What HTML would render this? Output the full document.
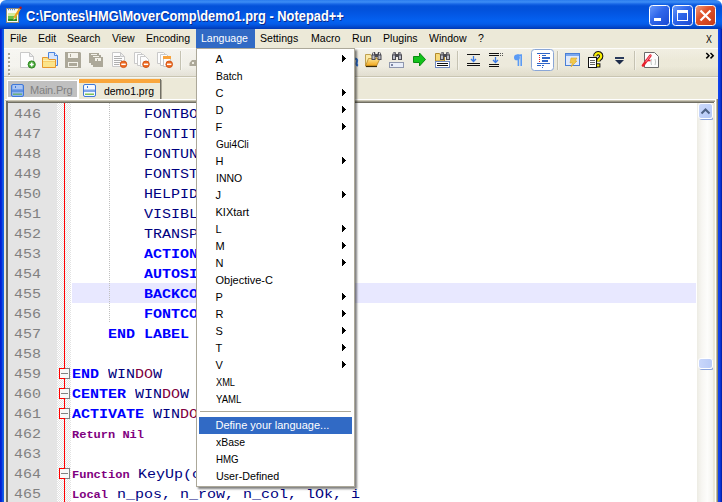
<!DOCTYPE html>
<html>
<head>
<meta charset="utf-8">
<title>Notepad++</title>
<style>
html,body{margin:0;padding:0;}
body{width:722px;height:502px;overflow:hidden;position:relative;background:#ece9d8;font-family:"Liberation Sans",sans-serif;}
.abs,.abs *{position:absolute;}
span{position:static !important;}
#frame{left:0;top:0;width:722px;height:502px;background:linear-gradient(to right,#0019cf 0px,#0831d9 2px,#166aee 3px,#0855dd 4px,#0855dd 717px,#1448ee 718px,#0a3be6 720px,#001a9a 722px);}
#title{left:0;top:0;width:722px;height:29px;border-radius:6px 6px 0 0;
 background:linear-gradient(to bottom,#2a7bee 0px,#3d8df5 2px,#1766e6 4px,#0351d9 6px,#0252dc 10px,#0358e6 15px,#0461f1 21px,#045ce9 24px,#034fd6 26px,#0140c0 28px,#0138b4 29px);}
#corner{left:0;top:0;width:722px;height:10px;background:#fff;}
#ttext{left:26px;top:8px;transform:scaleX(0.918);transform-origin:0 0;color:#fff;font-weight:bold;font-size:14px;white-space:nowrap;text-shadow:1px 1px 0 #0a2a8c;}
#client{left:4px;top:29px;width:714px;height:473px;background:#ece9d8;}
.mi{top:32px;font-size:11px;color:#000;white-space:nowrap;line-height:13px;}
#langhl{left:196px;top:29px;width:59px;height:19px;background:#316ac5;}
#toolbar{left:4px;top:48px;width:714px;height:29px;background:linear-gradient(to bottom,rgba(255,255,255,0.9) 0px,rgba(255,255,255,0.9) 1px,rgba(255,255,255,0.25) 1px,rgba(255,255,255,0) 12px,rgba(120,110,70,0) 18px,rgba(120,110,70,0.10) 27px,rgba(120,110,70,0.10) 29px),linear-gradient(to right,#f5f4ef 0%,#f0eee6 35%,#edeadc 70%,#ece9d8 100%);}
#editor{left:7px;top:101px;width:708px;height:401px;background:#fff;}
.code{left:71px;font-family:"Liberation Mono",monospace;font-size:12.5px;line-height:20px;height:20px;white-space:pre;letter-spacing:0px;transform:scaleX(1.2);transform-origin:0 0;}
.ln{left:13.5px;font-family:"Liberation Mono",monospace;font-size:12.5px;line-height:20px;height:20px;color:#808080;letter-spacing:0px;transform:scaleX(1.2);transform-origin:0 0;}
.b{font-weight:bold;}
.k{color:#0000ff;}
.p{color:#800080;font-weight:bold;}
.n{color:#000080;}
.d{color:#800040;}
#menu{z-index:5;left:196px;top:48px;width:159px;height:439px;background:#fff;border:1px solid #aca899;box-sizing:border-box;box-shadow:2px 2px 2px rgba(0,0,0,0.5);}
.it{left:18.5px;font-size:11px;line-height:17px;height:17px;color:#000;white-space:nowrap;}
.ar{left:145px;width:0;height:0;border-left:4px solid #000;border-top:3.5px solid transparent;border-bottom:3.5px solid transparent;}
</style>
</head>
<body>
<div class="abs" id="corner"></div>
<div class="abs" id="frame" style="top:8px;height:494px"></div>
<div class="abs" id="title"></div>
<div class="abs" id="ttext">C:\Fontes\HMG\MoverComp\demo1.prg - Notepad++</div>
<div class="abs" id="client"></div>
<div class="abs" id="langhl"></div>
<div class="abs mi" style="left:10px;transform:scaleX(0.96);transform-origin:0 0;">File</div>
<div class="abs mi" style="left:38px;transform:scaleX(0.96);transform-origin:0 0;">Edit</div>
<div class="abs mi" style="left:67px;transform:scaleX(0.96);transform-origin:0 0;">Search</div>
<div class="abs mi" style="left:112px;transform:scaleX(0.96);transform-origin:0 0;">View</div>
<div class="abs mi" style="left:146px;transform:scaleX(0.96);transform-origin:0 0;">Encoding</div>
<div class="abs mi" style="left:201px;color:#fff;transform:scaleX(0.96);transform-origin:0 0;">Language</div>
<div class="abs mi" style="left:260px;transform:scaleX(0.96);transform-origin:0 0;">Settings</div>
<div class="abs mi" style="left:311px;transform:scaleX(0.96);transform-origin:0 0;">Macro</div>
<div class="abs mi" style="left:352px;transform:scaleX(0.96);transform-origin:0 0;">Run</div>
<div class="abs mi" style="left:383px;transform:scaleX(0.96);transform-origin:0 0;">Plugins</div>
<div class="abs mi" style="left:429px;transform:scaleX(0.96);transform-origin:0 0;">Window</div>
<div class="abs mi" style="left:478px;transform:scaleX(0.96);transform-origin:0 0;">?</div>
<div class="abs mi" style="left:706px;transform:scaleX(0.8);transform-origin:0 0;top:33px;">X</div>
<div class="abs" id="toolbar"></div>
<div class="abs" style="left:4px;top:76px;width:714px;height:1px;background:#c9c5b2"></div>
<div class="abs" style="left:4px;top:77px;width:714px;height:1px;background:#f7f6f0"></div>
<div class="abs" style="left:7px;top:80px;width:72px;height:20px;background:#fff"></div>
<div class="abs" style="left:8px;top:81px;width:69px;height:16px;background:#c0c0c0"></div>
<div class="abs mi" style="left:30px;top:83px;color:#808080;line-height:14px;letter-spacing:-0.2px">Main.Prg</div>
<div class="abs" style="left:78px;top:78px;width:83px;height:22px;background:#ece9d8"></div>
<div class="abs" style="left:78px;top:79px;width:1px;height:21px;background:#fff"></div>
<div class="abs" style="left:79px;top:79px;width:81px;height:4px;background:#f9a63c"></div>
<div class="abs" style="left:160px;top:79px;width:1px;height:20px;background:#716f64"></div>
<div class="abs" style="left:161px;top:80px;width:1px;height:19px;background:#aca899"></div>
<div class="abs mi" style="left:104px;top:84px;line-height:14px;transform:scaleX(0.95);transform-origin:0 0">demo1.prg</div>
<div class="abs" style="left:5px;top:99px;width:712px;height:1px;background:#fff"></div>
<div class="abs" style="left:5px;top:100px;width:711px;height:1px;background:#cbc7b6"></div>
<div class="abs" id="editor"></div>
<div class="abs" style="left:6px;top:101px;width:709px;height:1px;background:#9d9a8a"></div>
<div class="abs" style="left:6px;top:102px;width:708px;height:1px;background:#716f64"></div>
<div class="abs" style="left:6px;top:101px;width:2px;height:401px;background:#716f64"></div>
<div class="abs" style="left:8px;top:103px;width:49px;height:399px;background:#e4e4e4"></div>
<div class="abs" style="left:57px;top:103px;width:14px;height:399px;background:conic-gradient(#fff 25%,#e2e2e2 0 50%,#fff 0 75%,#e2e2e2 0) 0 0/2px 2px"></div>
<div class="abs" style="left:64px;top:103px;width:1px;height:399px;background:#ff0000"></div>
<div class="abs" style="left:72px;top:283px;width:624px;height:20px;background:#e8e8ff"></div>
<div class="abs" style="left:109px;top:103px;width:1px;height:220px;background:repeating-linear-gradient(to bottom,#c0c0c0 0,#c0c0c0 1px,transparent 1px,transparent 2px)"></div>
<div class="abs ln" style="top:105px">446</div>
<div class="abs code n" style="left:143.7px;top:105px;transform:scaleX(1.2000)">FONTBOLD</div>
<div class="abs ln" style="top:125px">447</div>
<div class="abs code n" style="left:143.7px;top:125px;transform:scaleX(1.2000)">FONTITALIC</div>
<div class="abs ln" style="top:145px">448</div>
<div class="abs code n" style="left:143.7px;top:145px;transform:scaleX(1.2000)">FONTUNDERLINE</div>
<div class="abs ln" style="top:165px">449</div>
<div class="abs code n" style="left:143.7px;top:165px;transform:scaleX(1.2000)">FONTSTRIKEOUT</div>
<div class="abs ln" style="top:185px">450</div>
<div class="abs code n" style="left:143.7px;top:185px;transform:scaleX(1.2000)">HELPID</div>
<div class="abs ln" style="top:205px">451</div>
<div class="abs code n" style="left:143.7px;top:205px;transform:scaleX(1.2000)">VISIBLE</div>
<div class="abs ln" style="top:225px">452</div>
<div class="abs code n" style="left:143.7px;top:225px;transform:scaleX(1.2000)">TRANSPARENT</div>
<div class="abs ln" style="top:245px">453</div>
<div class="abs code k b" style="left:143.7px;top:245px;transform:scaleX(1.2000)">ACTION</div>
<div class="abs ln" style="top:265px">454</div>
<div class="abs code k b" style="left:143.7px;top:265px;transform:scaleX(1.2000)">AUTOSIZE</div>
<div class="abs ln" style="top:285px">455</div>
<div class="abs code k b" style="left:143.7px;top:285px;transform:scaleX(1.2000)">BACKCOLOR</div>
<div class="abs ln" style="top:305px">456</div>
<div class="abs code k b" style="left:143.7px;top:305px;transform:scaleX(1.2000)">FONTCOLOR</div>
<div class="abs ln" style="top:325px">457</div>
<div class="abs code k b" style="left:107.7px;top:325px;transform:scaleX(1.2000)">END LABEL</div>
<div class="abs ln" style="top:345px">458</div>
<div class="abs ln" style="top:365px">459</div>
<div class="abs code k b" style="left:71.7px;top:365px;transform:scaleX(1.2000)">END</div>
<div class="abs code n" style="left:107.7px;top:365px;transform:scaleX(1.2000)">WIN</div>
<div class="abs code d" style="left:134.7px;top:365px;transform:scaleX(1.2000)">DO</div>
<div class="abs code n" style="left:152.7px;top:365px;transform:scaleX(1.2000)">W</div>
<div class="abs ln" style="top:385px">460</div>
<div class="abs code k b" style="left:71.7px;top:385px;transform:scaleX(1.2000)">CENTER</div>
<div class="abs code n" style="left:134.7px;top:385px;transform:scaleX(1.2000)">WIN</div>
<div class="abs code d" style="left:161.7px;top:385px;transform:scaleX(1.2000)">DO</div>
<div class="abs code n" style="left:179.7px;top:385px;transform:scaleX(1.2000)">W</div>
<div class="abs ln" style="top:405px">461</div>
<div class="abs code k b" style="left:71.7px;top:405px;transform:scaleX(1.2000)">ACTIVATE</div>
<div class="abs code n" style="left:152.7px;top:405px;transform:scaleX(1.2000)">WIN</div>
<div class="abs code d" style="left:179.7px;top:405px;transform:scaleX(1.2000)">DO</div>
<div class="abs code n" style="left:197.7px;top:405px;transform:scaleX(1.2000)">W</div>
<div class="abs ln" style="top:425px">462</div>
<div class="abs code p" style="left:71.7px;top:425px;font-size:11.5px;transform:scaleX(1.0435)">Return Nil</div>
<div class="abs ln" style="top:445px">463</div>
<div class="abs ln" style="top:465px">464</div>
<div class="abs code p" style="left:71.7px;top:465px;font-size:11.5px;transform:scaleX(1.0435)">Function</div>
<div class="abs code n" style="left:138.3px;top:465px;transform:scaleX(1.2000)">KeyUp(cKey)</div>
<div class="abs ln" style="top:485px">465</div>
<div class="abs code p" style="left:71.7px;top:485px;font-size:11.5px;transform:scaleX(1.0435)">Local</div>
<div class="abs code n" style="left:116.7px;top:485px;transform:scaleX(1.2000)">n_pos, n_row, n_col, lOk, i</div>
<div class="abs" style="left:59px;top:368px;width:11px;height:11px;background:#808080"></div>
<div class="abs" style="left:59px;top:368px;width:6px;height:11px;background:#ff0000"></div>
<div class="abs" style="left:60px;top:369px;width:9px;height:9px;background:#f8f8f8"></div>
<div class="abs" style="left:61px;top:373px;width:7px;height:1px;background:#808080"></div>
<div class="abs" style="left:59px;top:388px;width:11px;height:11px;background:#808080"></div>
<div class="abs" style="left:59px;top:388px;width:6px;height:11px;background:#ff0000"></div>
<div class="abs" style="left:60px;top:389px;width:9px;height:9px;background:#f8f8f8"></div>
<div class="abs" style="left:61px;top:393px;width:7px;height:1px;background:#808080"></div>
<div class="abs" style="left:59px;top:408px;width:11px;height:11px;background:#808080"></div>
<div class="abs" style="left:59px;top:408px;width:6px;height:11px;background:#ff0000"></div>
<div class="abs" style="left:60px;top:409px;width:9px;height:9px;background:#f8f8f8"></div>
<div class="abs" style="left:61px;top:413px;width:7px;height:1px;background:#808080"></div>
<div class="abs" style="left:59px;top:468px;width:11px;height:11px;background:#808080"></div>
<div class="abs" style="left:59px;top:468px;width:6px;height:11px;background:#ff0000"></div>
<div class="abs" style="left:60px;top:469px;width:9px;height:9px;background:#f8f8f8"></div>
<div class="abs" style="left:61px;top:473px;width:7px;height:1px;background:#808080"></div>
<div class="abs" style="left:697px;top:103px;width:16px;height:399px;background:linear-gradient(to right,#edece4,#f7f6f2 30%,#fdfdfb 65%,#f4f3ee)"></div>
<div class="abs" style="left:698px;top:103px;width:15px;height:16px;border:1px solid #fff;border-radius:3px;background:linear-gradient(135deg,#cbd9fb,#b4c8f6);box-sizing:border-box;box-shadow:1px 1px 0 #8ba4dc"></div>
<svg class="abs" style="left:698px;top:104px" width="15" height="15"><path d="M3.5 9.5 L7.5 5.5 L11.5 9.5" stroke="#4d6185" stroke-width="2" fill="none"/></svg>
<div class="abs" style="left:698px;top:358px;width:15px;height:11px;border:1px solid #fff;border-radius:3px;background:linear-gradient(to right,#c9d7fb,#b9cbf7);box-sizing:border-box;box-shadow:1px 1px 0 #8ba4dc"></div>
<div class="abs" style="left:713px;top:103px;width:2px;height:399px;background:#ece9d8"></div>
<div class="abs" style="left:715px;top:100px;width:1px;height:402px;background:#fff"></div>
<div class="abs" style="left:716px;top:99px;width:1px;height:403px;background:#c4bfa6"></div>
<div class="abs" style="left:717px;top:99px;width:1px;height:403px;background:#8c876e"></div>
<div class="abs" id="menu">
<div class="it" style="top:2px;">A</div>
<svg style="left:145px;top:6px" width="4" height="7" shape-rendering="crispEdges"><path d="M0 0h1v1h1v1h1v1h1v1h-1v1h-1v1h-1v1h-1z" fill="#000"/></svg>
<div class="it" style="top:19px;transform:scaleX(0.94);transform-origin:0 0;">Batch</div>
<div class="it" style="top:36px;">C</div>
<svg style="left:145px;top:40px" width="4" height="7" shape-rendering="crispEdges"><path d="M0 0h1v1h1v1h1v1h1v1h-1v1h-1v1h-1v1h-1z" fill="#000"/></svg>
<div class="it" style="top:53px;">D</div>
<svg style="left:145px;top:57px" width="4" height="7" shape-rendering="crispEdges"><path d="M0 0h1v1h1v1h1v1h1v1h-1v1h-1v1h-1v1h-1z" fill="#000"/></svg>
<div class="it" style="top:70px;">F</div>
<svg style="left:145px;top:74px" width="4" height="7" shape-rendering="crispEdges"><path d="M0 0h1v1h1v1h1v1h1v1h-1v1h-1v1h-1v1h-1z" fill="#000"/></svg>
<div class="it" style="top:87px;transform:scaleX(0.91);transform-origin:0 0;">Gui4Cli</div>
<div class="it" style="top:104px;">H</div>
<svg style="left:145px;top:108px" width="4" height="7" shape-rendering="crispEdges"><path d="M0 0h1v1h1v1h1v1h1v1h-1v1h-1v1h-1v1h-1z" fill="#000"/></svg>
<div class="it" style="top:121px;transform:scaleX(0.95);transform-origin:0 0;">INNO</div>
<div class="it" style="top:138px;">J</div>
<svg style="left:145px;top:142px" width="4" height="7" shape-rendering="crispEdges"><path d="M0 0h1v1h1v1h1v1h1v1h-1v1h-1v1h-1v1h-1z" fill="#000"/></svg>
<div class="it" style="top:155px;">KIXtart</div>
<div class="it" style="top:172px;">L</div>
<svg style="left:145px;top:176px" width="4" height="7" shape-rendering="crispEdges"><path d="M0 0h1v1h1v1h1v1h1v1h-1v1h-1v1h-1v1h-1z" fill="#000"/></svg>
<div class="it" style="top:189px;">M</div>
<svg style="left:145px;top:193px" width="4" height="7" shape-rendering="crispEdges"><path d="M0 0h1v1h1v1h1v1h1v1h-1v1h-1v1h-1v1h-1z" fill="#000"/></svg>
<div class="it" style="top:206px;">N</div>
<svg style="left:145px;top:210px" width="4" height="7" shape-rendering="crispEdges"><path d="M0 0h1v1h1v1h1v1h1v1h-1v1h-1v1h-1v1h-1z" fill="#000"/></svg>
<div class="it" style="top:223px;">Objective-C</div>
<div class="it" style="top:240px;">P</div>
<svg style="left:145px;top:244px" width="4" height="7" shape-rendering="crispEdges"><path d="M0 0h1v1h1v1h1v1h1v1h-1v1h-1v1h-1v1h-1z" fill="#000"/></svg>
<div class="it" style="top:257px;">R</div>
<svg style="left:145px;top:261px" width="4" height="7" shape-rendering="crispEdges"><path d="M0 0h1v1h1v1h1v1h1v1h-1v1h-1v1h-1v1h-1z" fill="#000"/></svg>
<div class="it" style="top:274px;">S</div>
<svg style="left:145px;top:278px" width="4" height="7" shape-rendering="crispEdges"><path d="M0 0h1v1h1v1h1v1h1v1h-1v1h-1v1h-1v1h-1z" fill="#000"/></svg>
<div class="it" style="top:291px;">T</div>
<svg style="left:145px;top:295px" width="4" height="7" shape-rendering="crispEdges"><path d="M0 0h1v1h1v1h1v1h1v1h-1v1h-1v1h-1v1h-1z" fill="#000"/></svg>
<div class="it" style="top:308px;">V</div>
<svg style="left:145px;top:312px" width="4" height="7" shape-rendering="crispEdges"><path d="M0 0h1v1h1v1h1v1h1v1h-1v1h-1v1h-1v1h-1z" fill="#000"/></svg>
<div class="it" style="top:325px;transform:scaleX(0.84);transform-origin:0 0;">XML</div>
<div class="it" style="top:342px;transform:scaleX(0.87);transform-origin:0 0;">YAML</div>
<div style="left:3px;top:362px;width:151px;height:1px;background:#aca899"></div>
<div style="left:2px;top:368px;width:153px;height:17px;background:#316ac5"></div>
<div class="it" style="top:368px;color:#fff;">Define your language...</div>
<div class="it" style="top:385px;transform:scaleX(0.95);transform-origin:0 0;">xBase</div>
<div class="it" style="top:402px;transform:scaleX(0.88);transform-origin:0 0;">HMG</div>
<div class="it" style="top:419px;transform:scaleX(0.975);transform-origin:0 0;">User-Defined</div>
</div>
<svg class="abs" style="left:0;top:0" width="722" height="502" viewBox="0 0 722 502">
<rect x="8" y="53" width="2" height="2" fill="#a7a392"/>
<rect x="9" y="55" width="1" height="1" fill="#fff"/>
<rect x="8" y="57" width="2" height="2" fill="#a7a392"/>
<rect x="9" y="59" width="1" height="1" fill="#fff"/>
<rect x="8" y="61" width="2" height="2" fill="#a7a392"/>
<rect x="9" y="63" width="1" height="1" fill="#fff"/>
<rect x="8" y="65" width="2" height="2" fill="#a7a392"/>
<rect x="9" y="67" width="1" height="1" fill="#fff"/>
<rect x="8" y="69" width="2" height="2" fill="#a7a392"/>
<rect x="9" y="71" width="1" height="1" fill="#fff"/>
<rect x="8" y="73" width="2" height="2" fill="#a7a392"/>
<rect x="9" y="75" width="1" height="1" fill="#fff"/>
<g transform="translate(20,52)"><path d="M0.5 0.5h9l4 4v11h-13z" fill="#fdfdfd" stroke="#c9c9c9"/><path d="M9.5 0.5v4h4z" fill="#ececec" stroke="#c9c9c9"/><circle cx="11.7" cy="12.5" r="3.6" fill="#4aa83a" stroke="#2f8a23" stroke-width="1"/><path d="M9.7 12.5h4M11.7 10.5v4" stroke="#fff" stroke-width="1.5"/></g>
<g transform="translate(42,52)"><path d="M6.5 0.5h6l3 3v10h-9z" fill="#d6e4fb" stroke="#4a84e0"/><path d="M12.5 0.5v3h3" fill="#eef4fe" stroke="#4a84e0"/><path d="M0.5 5.5h5l1.5 2h6.5v8h-13z" fill="#fbe48a" stroke="#e6962c"/><path d="M1 9.5h12" stroke="#f7cf6a" stroke-width="1"/><path d="M1 8.5h12" stroke="#fdf0b4" stroke-width="1"/></g>
<g transform="translate(65,52)"><path d="M0 0h15l1 1v15h-16z" fill="#aca899"/><rect x="3" y="1" width="10" height="5" fill="#f4f2ea"/><rect x="5" y="2" width="1" height="3" fill="#aca899"/><rect x="3" y="10" width="10" height="5" fill="#f4f2ea"/><rect x="4" y="11" width="8" height="3" fill="#aca899"/></g>
<g transform="translate(89,53)"><path d="M0 0h10v2h2v2h2v10h-10v-2h-2v-2h-2z" fill="#aca899"/><rect x="2" y="1" width="6" height="1" fill="#f4f2ea"/><rect x="4" y="3" width="6" height="1" fill="#f4f2ea"/><rect x="6" y="5" width="6" height="3" fill="#f4f2ea"/><rect x="8" y="6" width="1" height="2" fill="#aca899"/></g>
<g transform="translate(112,52)"><path d="M0.5 0.5h8l4 4v10h-12z" fill="#fdfdfd" stroke="#c9c9c9"/><path d="M8.5 0.5v4h4z" fill="#ececec" stroke="#c9c9c9"/><path d="M2 4.5h6M2 6.5h8M2 8.5h8M2 10.5h6M2 12.5h5" stroke="#b0b0b0"/><circle cx="11.5" cy="12.3" r="3.3" fill="#ee6a22" stroke="#cf5212" stroke-width="0.9"/><rect x="9.3" y="11.55" width="4.4" height="1.5" fill="#fff"/></g>
<g transform="translate(134,52)"><path d="M0.5 0.5h6l3 3v8h-9z" fill="#fdfdfd" stroke="#c9c9c9"/><path d="M3.5 2.5h6l3 3v8h-9z" fill="#fdfdfd" stroke="#c9c9c9"/><path d="M6.5 4.5h5l3 3v7h-8z" fill="#fdfdfd" stroke="#c9c9c9"/><circle cx="12" cy="12.3" r="3.3" fill="#ee6a22" stroke="#cf5212" stroke-width="0.9"/><rect x="9.8" y="11.55" width="4.4" height="1.5" fill="#fff"/></g>
<g transform="translate(157,52)"><path d="M0.5 0.5h6l3 3v8h-9z" fill="#fdfdfd" stroke="#c9c9c9"/><path d="M3.5 2.5h6l3 3v8h-9z" fill="#fdfdfd" stroke="#c9c9c9"/><path d="M6.5 4.5h7v10h-7z" fill="#fdfdfd" stroke="#c9c9c9"/><rect x="6" y="4" width="8" height="3" fill="#f9a23a"/><circle cx="12.2" cy="12.3" r="3.3" fill="#ee6a22" stroke="#cf5212" stroke-width="0.9"/><rect x="10.0" y="11.55" width="4.4" height="1.5" fill="#fff"/></g>
<rect x="180" y="51" width="1" height="19" fill="#c5c2b2"/><rect x="181" y="51" width="1" height="19" fill="#fff" opacity="0.4"/>
<path d="M189.500 63l2.500-3h4v6h-6.500z" fill="#aca899"/><rect x="192" y="62" width="2" height="2" fill="#efede4"/>
<path d="M355.300 58.500q2.600 0.800 1.600 3.500t1 3.800" stroke="#2f6fcf" stroke-width="2" fill="none"/>
<g transform="translate(365,54)"><path d="M0.5 0.5h5l1 1.5h5v10h-11z" fill="#fbe9a6" stroke="#bfa050"/><path d="M0.5 12l3-7.5h11.5l-3.5 7.5z" fill="url(#gf)" stroke="#b8882a" stroke-width="0.8"/><path d="M1 12.5h11" stroke="#3a2a08" stroke-width="1.2"/></g>
<g transform="translate(370.5,52)"><path d="M1 3l1.5-3h2l0.5 2h2l0.5-2h2l1.5 3v5h-4v-3h-2v3h-4z" fill="#4a4a52"/><path d="M2 3.500h2v3.500h-2zM8 3.500h2v3.500h-2z" fill="#b9bcc8"/><path d="M3 0.500v2M9 0.500v2" stroke="#e4e4ea" stroke-width="1"/></g>
<g transform="translate(391,52)"><path d="M1 3l1.5-3h2l0.5 2h2l0.5-2h2l1.5 3v5h-4v-3h-2v3h-4z" fill="#4a4a52"/><path d="M2 3.500h2v3.500h-2zM8 3.500h2v3.500h-2z" fill="#b9bcc8"/><path d="M3 0.500v2M9 0.500v2" stroke="#e4e4ea" stroke-width="1"/></g>
<rect x="389.5" y="62.500" width="14" height="5" fill="#e9eef9" stroke="#8f97ae"/><rect x="391" y="64" width="2" height="2" fill="#7d86a3"/>
<path d="M413.500 56.500h6v-3.500l6 6.500l-6 6.500v-3.500h-6z" fill="#12c21a" stroke="#0a8a10" stroke-width="1"/>
<path d="M435.500 53.500h4l1 1.500h4v6h-9z" fill="#f7d978" stroke="#b28a2a"/>
<g transform="translate(439,52)"><path d="M1 3l1.5-3h2l0.5 2h2l0.5-2h2l1.5 3v5h-4v-3h-2v3h-4z" fill="#4a4a52"/><path d="M2 3.500h2v3.500h-2zM8 3.500h2v3.500h-2z" fill="#b9bcc8"/><path d="M3 0.500v2M9 0.500v2" stroke="#e4e4ea" stroke-width="1"/></g>
<rect x="435.500" y="61.500" width="14" height="6" fill="#fff" stroke="#6f88c0"/><path d="M437 63.500h11M437 65.500h11" stroke="#111" stroke-width="1"/>
<rect x="457" y="51" width="1" height="19" fill="#c5c2b2"/><rect x="458" y="51" width="1" height="19" fill="#fff" opacity="0.4"/>
<path d="M467 54.500h13M467 63.500h13M467 65.500h13" stroke="#111" stroke-width="1"/><path d="M473.500 56v5M471 59l2.500 2.500l2.500-2.500" stroke="#3a7ae6" stroke-width="1.3" fill="none"/>
<path d="M489 53.500h10M489 55.500h10M489 64.500h10M489 66.500h10" stroke="#111" stroke-width="1"/><path d="M500 53.500h1M502 53.500h1M500 55.500h1M502 55.500h1" stroke="#555" stroke-width="1"/><path d="M495.500 57v5M493 60l2.500 2.500l2.500-2.500" stroke="#3a7ae6" stroke-width="1.3" fill="none"/>
<g fill="#5b9bf5"><circle cx="516.900" cy="57.400" r="2.900"/><rect x="516.900" y="54.500" width="5.100" height="1.500"/><rect x="517.600" y="54.500" width="1.600" height="11.500"/><rect x="520.400" y="54.500" width="1.600" height="11.500"/></g>
<rect x="531.500" y="49.500" width="22" height="21" rx="3" ry="3" fill="#fff" stroke="#8aa6d6"/>
<g transform="translate(536,52)"><path d="M1 1.500h13M6 3.500h4M6 6h8M6 9h6M1 11.500h13M1 13.500h4M6 13.500h2" stroke="#2f66c8" stroke-width="1"/><rect x="6" y="5" width="8" height="2" fill="#2f66c8"/><rect x="6" y="8" width="6" height="2" fill="#2f66c8"/><path d="M3.500 3v7" stroke="#ee1c1c" stroke-width="1" stroke-dasharray="1 1"/><rect x="6" y="15" width="1" height="1" fill="#2f66c8"/></g>
<rect x="557" y="51" width="1" height="19" fill="#c5c2b2"/><rect x="558" y="51" width="1" height="19" fill="#fff" opacity="0.4"/>
<rect x="565.500" y="53.500" width="14" height="12" fill="#dfe9fb" stroke="#4a7fd6"/><rect x="566" y="54" width="13" height="2" fill="#7aa7ee"/><path d="M571 58h6l-2 3h2l-6 6l1.500-4h-2.500z" fill="#f2c84a" stroke="#d9a82a" stroke-width="0.600"/>
<rect x="588.500" y="57.500" width="8" height="10" fill="#fff" stroke="#111"/><path d="M590 60.500h5M590 62.500h5M590 64.500h5" stroke="#666" stroke-width="1"/><path d="M595.200 56.200a3 3 0 1 1 4.600 2.500q-1.600 1-1.600 2.800" stroke="#111" stroke-width="4.400" fill="none"/><rect x="596" y="63.300" width="4.400" height="4.200" fill="#111"/><path d="M595.200 56.200a3 3 0 1 1 4.600 2.500q-1.600 1-1.600 2.800" stroke="#f8ee00" stroke-width="2.300" fill="none"/><rect x="597" y="64.300" width="2.400" height="2.200" fill="#f8ee00"/>
<rect x="615" y="57" width="9" height="2" fill="#2a3a5c"/><path d="M615 60h9l-4.500 4.500z" fill="#1e2c4a"/>
<rect x="634" y="51" width="1" height="19" fill="#c5c2b2"/><rect x="635" y="51" width="1" height="19" fill="#fff" opacity="0.4"/>
<path d="M644.500 52.500h10l4 4v11h-14z" fill="#fdfdfd" stroke="#6a6a6a"/><path d="M651.500 59q-1 3 0 6M655 59q1.300 3 0 6" stroke="#c3c8c4" stroke-width="1" fill="none"/><path d="M643 65.500L650.300 55.700" stroke="#e8202c" stroke-width="2.700" stroke-linecap="round"/><path d="M645.500 60.500h5" stroke="#e8202c" stroke-width="1.600"/><path d="M646 61.500L650.300 55.700" stroke="#f7a3c6" stroke-width="0.800" stroke-linecap="round"/>
<path d="M706.300 53l2.700 2.700l-2.700 2.700M710.500 53l2.700 2.700l-2.700 2.700" stroke="#000" stroke-width="1.500" fill="none"/>
<g transform="translate(11,84)"><rect x="0.5" y="0.5" width="12" height="12" rx="1.5" fill="#8fb2ee" stroke="#3f78d8"/><rect x="2" y="1" width="9" height="4" fill="#fff" opacity="0.25"/><rect x="4" y="2" width="1" height="2" fill="#3f78d8"/><rect x="1" y="5.500" width="11" height="2.500" fill="#5f90e2"/><rect x="2" y="9.500" width="9" height="1.500" fill="#6db07a"/></g>
<g transform="translate(83,84)"><rect x="0.5" y="0.5" width="12" height="12" rx="1.5" fill="#f4f8ff" stroke="#3f78d8"/><rect x="2" y="1" width="9" height="4" fill="#fff" opacity="0.25"/><rect x="4" y="2" width="1" height="2" fill="#3f78d8"/><rect x="1" y="5.500" width="11" height="2.500" fill="#7fa6ea"/><rect x="2" y="9.500" width="9" height="1.500" fill="#7cc25a"/></g>
<g transform="translate(6,7)"><rect x="0.5" y="1.500" width="12" height="14" fill="#fbfbf3" stroke="#8e8a78"/><rect x="2" y="6" width="9" height="8" fill="#6cc04a"/><rect x="2" y="6" width="9" height="3" fill="#d8ec9a"/><rect x="2" y="12" width="9" height="2" fill="#2d8a2a"/><path d="M2 2.500h1M4 2.500h1M6 2.500h1M8 2.500h1" stroke="#5a8edc" stroke-width="1.400"/><path d="M14 1.500l-6 10" stroke="#f0a41c" stroke-width="2.200"/><path d="M8.500 10.500l-1.300 2.800l2.500-1.800z" fill="#f6dfae"/><circle cx="14.600" cy="0.800" r="1.200" fill="#c01818"/></g>
<defs><linearGradient id="gf" x1="0" y1="0" x2="0" y2="1"><stop offset="0" stop-color="#fbe596"/><stop offset="1" stop-color="#f2a516"/></linearGradient><linearGradient id="gb" x1="0" y1="0" x2="1" y2="1"><stop offset="0" stop-color="#6a9afc"/><stop offset="0.45" stop-color="#2f66ea"/><stop offset="1" stop-color="#1a48d2"/></linearGradient><linearGradient id="gr" x1="0" y1="0" x2="1" y2="1"><stop offset="0" stop-color="#f0a080"/><stop offset="0.4" stop-color="#e0522a"/><stop offset="1" stop-color="#c43a16"/></linearGradient></defs>
<rect x="649.5" y="5.500" width="20" height="20" rx="3" fill="url(#gb)" stroke="#fff" stroke-width="1"/>
<rect x="672.5" y="5.500" width="20" height="20" rx="3" fill="url(#gb)" stroke="#fff" stroke-width="1"/>
<rect x="695.5" y="5.500" width="20" height="20" rx="3" fill="url(#gr)" stroke="#fff" stroke-width="1"/>
<rect x="654" y="18" width="7" height="3" fill="#fff"/>
<rect x="677.500" y="10.500" width="10" height="10" fill="none" stroke="#fff" stroke-width="1"/><rect x="677" y="10" width="11" height="3" fill="#fff"/>
<path d="M700.500 10.500l10 10M710.500 10.500l-10 10" stroke="#fff" stroke-width="2.200"/>
</svg>
</body>
</html>
